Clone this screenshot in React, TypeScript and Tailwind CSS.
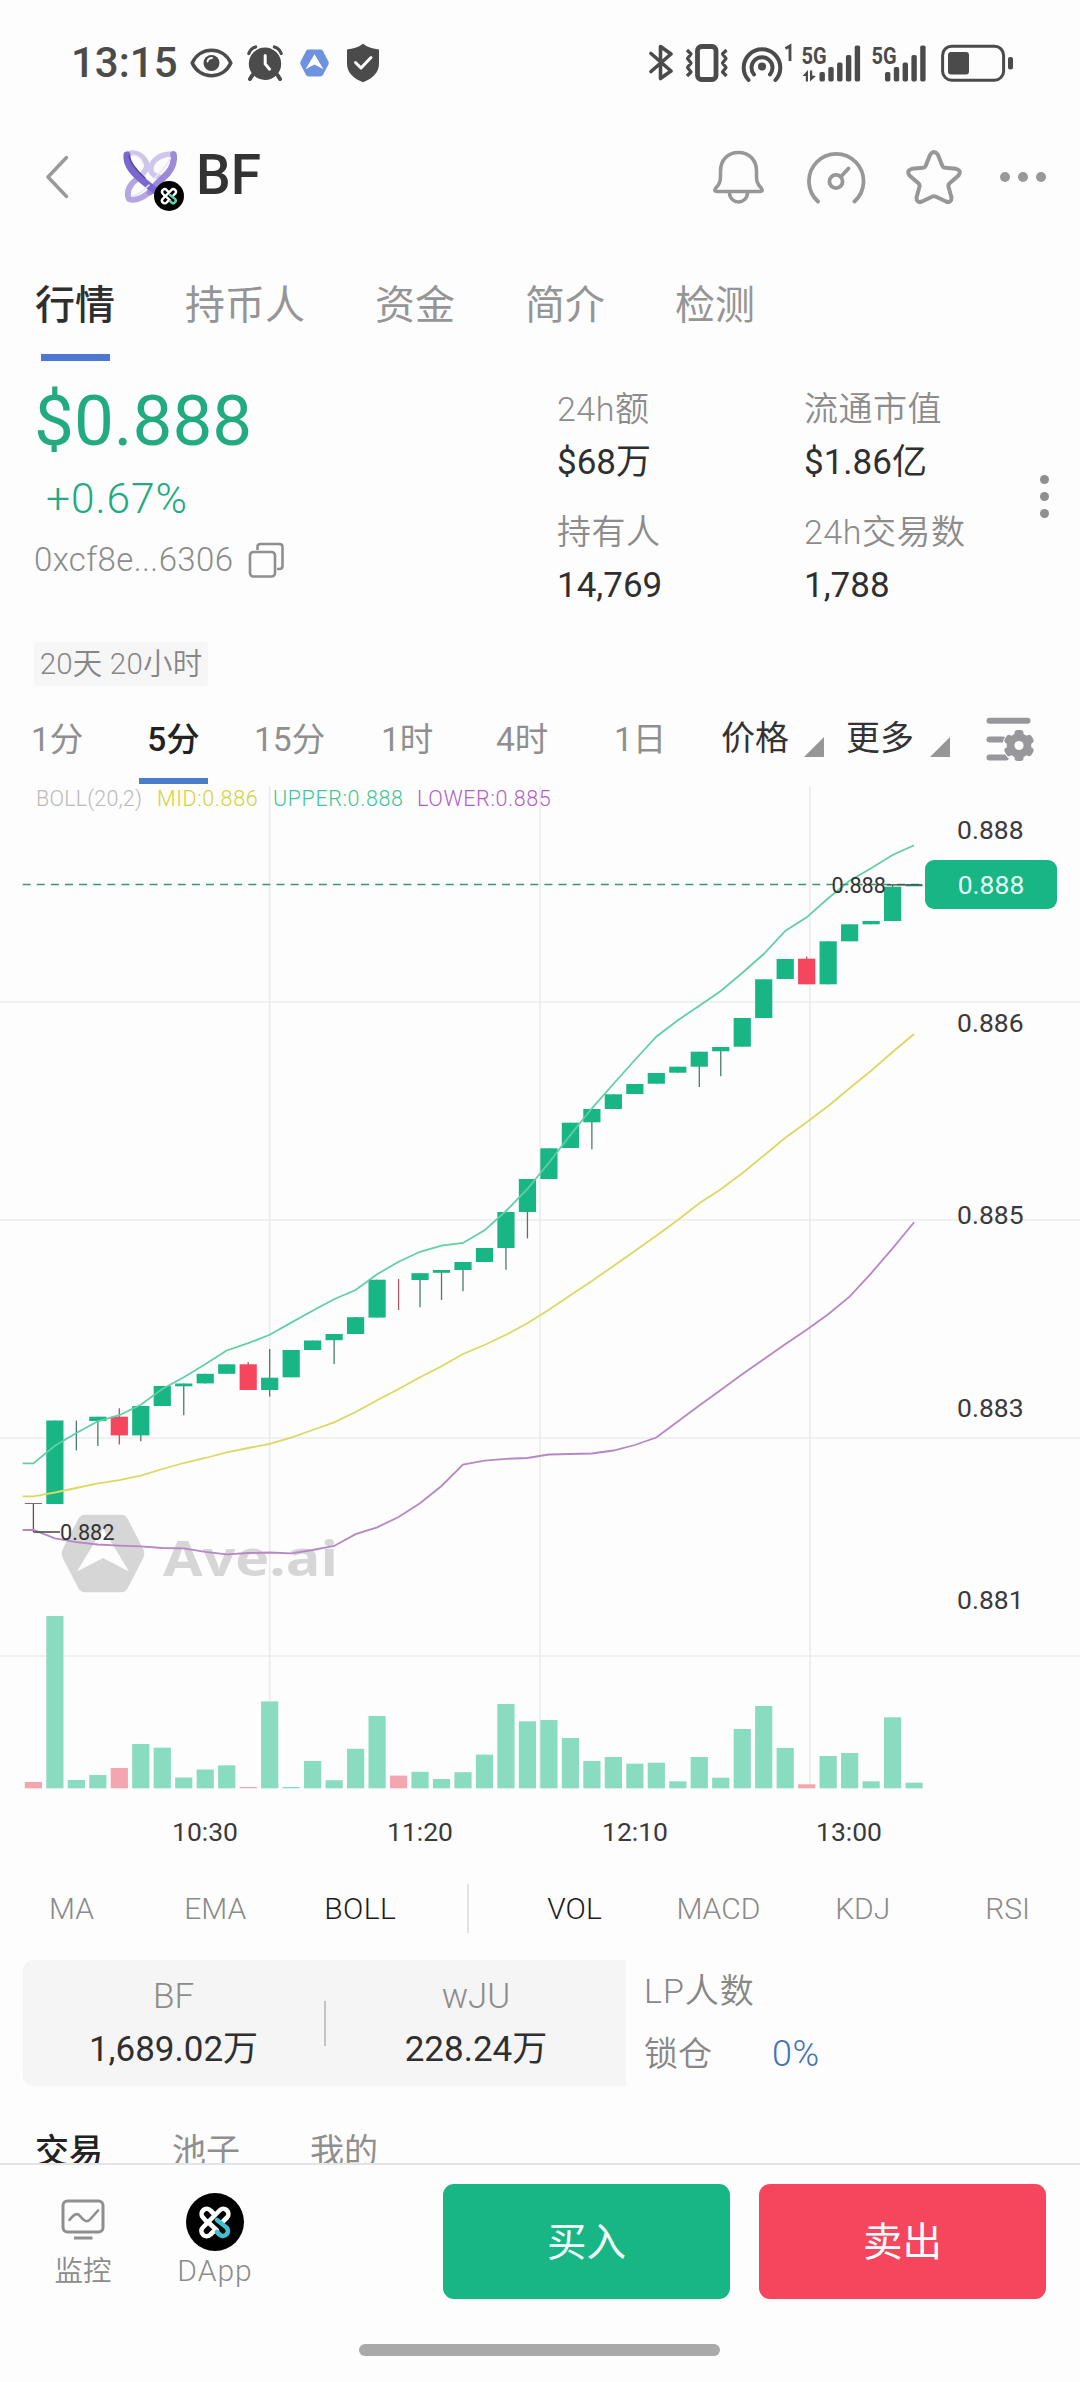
import React from "react";

const GREEN = "#18b585";
const RED = "#f6465d";

/* Candle: body top, body bottom, wick top, wick bottom, volume top, falling flag (chart coordinates) */
type Candle = [number, number, number, number, number, 0 | 1];
const CANDLES: Candle[] = [
  [1503, 1504, 1503, 1532, 1782, 1],
  [1420.5, 1504, 1420.5, 1504, 1616, 0],
  [1420.5, 1420.5, 1420.5, 1450.4, 1780, 0],
  [1416.7, 1421, 1416.7, 1446, 1775, 0],
  [1416.7, 1435.4, 1408.3, 1444.6, 1768, 1],
  [1406, 1435.4, 1406, 1441.2, 1744, 0],
  [1386, 1406, 1386, 1406, 1747.7, 0],
  [1383.5, 1386.3, 1383.5, 1415.2, 1777.5, 0],
  [1373.8, 1383.4, 1373.8, 1383.4, 1769.5, 0],
  [1364.3, 1373.8, 1364.3, 1373.8, 1765.3, 0],
  [1364.3, 1390, 1362, 1390, 1787, 1],
  [1377.7, 1390, 1349, 1396.4, 1701.4, 0],
  [1350, 1377.3, 1350, 1377.3, 1787, 0],
  [1340.5, 1350, 1340.5, 1350, 1761, 0],
  [1334, 1340.2, 1334, 1364, 1780.2, 0],
  [1317.2, 1334, 1317.2, 1334, 1748.8, 0],
  [1279.7, 1317.6, 1279.7, 1317.6, 1716, 0],
  [1279, 1279, 1279, 1310, 1775.6, 1],
  [1273.2, 1280, 1273.2, 1307.2, 1771.8, 0],
  [1270, 1272.8, 1270, 1300, 1779, 0],
  [1262, 1270, 1262, 1291.2, 1772.2, 0],
  [1248, 1262, 1248, 1262, 1754.6, 0],
  [1212, 1248, 1212, 1269.7, 1704, 0],
  [1179, 1212, 1179, 1238.4, 1721.3, 0],
  [1148.3, 1179, 1148.3, 1179, 1720, 0],
  [1122.7, 1148, 1122.7, 1148, 1738, 0],
  [1109, 1122.3, 1109, 1149.3, 1761, 0],
  [1094.3, 1109, 1094.3, 1109, 1757, 0],
  [1084, 1094, 1084, 1094, 1763.7, 0],
  [1073, 1083.7, 1073, 1083.7, 1762.7, 0],
  [1066.7, 1072.7, 1066.7, 1072.7, 1781.3, 0],
  [1051.7, 1066.7, 1051.7, 1087, 1757, 0],
  [1047, 1051.3, 1047, 1076.3, 1777.7, 0],
  [1018, 1046.7, 1018, 1046.7, 1729, 0],
  [979.3, 1018, 979.3, 1018, 1706, 0],
  [959, 979, 959, 979, 1748, 0],
  [958.7, 984.3, 956.5, 984.3, 1784.3, 1],
  [941.3, 984.3, 941.3, 984.3, 1756, 0],
  [924.3, 941.3, 924.3, 941.3, 1753, 0],
  [921, 924.3, 921, 924.3, 1781.3, 0],
  [886.7, 921, 885, 921, 1717.3, 0],
  [884.5, 886.3, 885, 885, 1782.7, 0],
];

const UPPER = [
  1463.4, 1445.8, 1433, 1421.3, 1415.2, 1404.8, 1389, 1377.3, 1364.3, 1350.5, 1343.2, 1334.8, 1322.6, 1310.7, 1299.2,
  1290, 1274.3, 1261.7, 1251.8, 1245.6, 1243, 1230.3, 1211, 1189, 1162.7, 1135, 1108.3, 1084, 1060, 1036.7, 1020.3,
  1005.7, 991, 973, 954, 931, 917.3, 898.3, 880.7, 868.3, 855, 845.3,
];
const MID = [
  1496.3, 1492.5, 1488, 1483.3, 1480.2, 1475.6, 1469, 1463, 1458, 1452.3, 1448, 1443.9, 1437.7, 1430, 1422.4, 1412,
  1400.2, 1389, 1377.3, 1366.2, 1354, 1345, 1334.8, 1323.3, 1309.7, 1295.3, 1281, 1266, 1251, 1235.7, 1220, 1203.3,
  1189.3, 1173.3, 1155.7, 1137.7, 1122.3, 1106, 1088.3, 1070.7, 1052, 1034,
];
const LOWER = [
  1530, 1538.4, 1542.2, 1544.5, 1545.6, 1546.4, 1548, 1548.3, 1551.8, 1554.4, 1553, 1552.5, 1553.3, 1550, 1546, 1534.2,
  1527.3, 1517, 1503.2, 1486, 1464.5, 1460.7, 1458.8, 1458, 1454.5, 1454, 1453.5, 1450.5, 1445, 1437.5, 1421.5, 1405.5,
  1390, 1374.3, 1359.3, 1344.3, 1329.7, 1314.3, 1296.7, 1273.3, 1248.3, 1222.3,
];

const candleX = (i: number) => 33.4 + i * 21.48;
const linePoints = (ys: number[]) =>
  `22.7,${ys[0]} ` + ys.map((y, i) => `${candleX(i).toFixed(1)},${y}`).join(" ");

/* ---------- icons ---------- */

function Eye() {
  return (
    <svg width="43" height="30" viewBox="0 0 43 30" fill="none" stroke="#4b4b4b">
      <path d="M2.2 15C10 -2 33 -2 40.8 15C33 32 10 32 2.2 15Z" strokeWidth="3.6" strokeLinejoin="round" />
      <circle cx="21.5" cy="15" r="8" fill="#4b4b4b" stroke="none" />
      <path d="M17.5 13.5A4.5 4.5 0 0 1 22 10" stroke="#fff" strokeWidth="1.8" strokeLinecap="round" />
    </svg>
  );
}

function Alarm() {
  return (
    <svg width="36" height="36" viewBox="0 0 36 36" fill="none" stroke="#4b4b4b" strokeLinecap="round">
      <circle cx="18" cy="18.7" r="16.2" fill="#4b4b4b" stroke="none" />
      <path d="M-.5 11Q2.500 3.500 10.500 .5M36.500 11Q33.500 3.500 25.500 .5" stroke="#fdfdfd" strokeWidth="7" strokeLinecap="butt" />
      <path d="M1.800 8.500Q3.500 3.500 8.600 2M34.200 8.500Q32.500 3.500 27.400 2" strokeWidth="3.2" />
      <path d="M5.5 30L3 34M30.5 30L33 34" strokeWidth="4" />
      <path d="M18.2 10.5V19L22.6 24.2" stroke="#fff" strokeWidth="3" />
    </svg>
  );
}

function AveHex({ className, color, arrow }: { className: string; color: string; arrow: string }) {
  return (
    <svg className={className} viewBox="0 0 84 78">
      <path
        d="M25 0H59Q64 0 66.500 4L82 34Q84.500 39 82 44L66.500 74Q64 78 59 78H25Q20 78 17.500 74L2 44Q-.500 39 2 34L17.500 4Q20 0 25 0Z"
        fill={color}
      />
      <path d="M42 14L68 57L42 43.500L16 57Z" fill={arrow} />
    </svg>
  );
}

function Shield() {
  return (
    <svg width="34" height="40" viewBox="0 0 34 40" fill="none">
      <path d="M17 .8C22 4.500 27 6 33 6.400V21C33 29.500 26 36 17 39.200C8 36 1 29.500 1 21V6.400C7 6 12 4.500 17 .8Z" fill="#4b4b4b" />
      <path d="M9.500 19.500L15 25L25 14.500" stroke="#fff" strokeWidth="3" strokeLinecap="round" strokeLinejoin="round" />
    </svg>
  );
}

function BluetoothIcon() {
  return (
    <svg width="24" height="37" viewBox="0 0 24 37" fill="none" stroke="#4b4b4b" strokeWidth="3.600" strokeLinejoin="round" strokeLinecap="round">
      <path d="M2 9.500L22 27L11.500 34.500V2.500L22 10L2 27.500" />
    </svg>
  );
}

function Vibrate() {
  return (
    <svg width="44" height="38" viewBox="0 0 44 38" fill="none" stroke="#4b4b4b">
      <rect x="12.500" y="2.500" width="18.500" height="33" rx="4" strokeWidth="4.800" />
      <path d="M2 6L6 10L2.500 14.500L6 19L2.500 23.500L6 28L2 32M41.500 6L37.500 10L41 14.500L37.500 19L41 23.500L37.500 28L41.500 32" strokeWidth="3.200" strokeLinejoin="round" />
    </svg>
  );
}

function Hotspot() {
  return (
    <svg width="52" height="40" viewBox="0 0 52 40" fill="none" stroke="#4b4b4b" strokeWidth="4">
      <path d="M7.500 37A18.300 18.300 0 1 1 34.500 37" strokeLinecap="round" />
      <path d="M13 31.500A10.500 10.500 0 1 1 29 31.500" strokeLinecap="round" />
      <circle cx="21" cy="23.500" r="4" fill="#4b4b4b" stroke="none" />
      <path d="M44.500 5.500L49 3V18" strokeWidth="2.800" />
    </svg>
  );
}

function Signal({ arrows }: { arrows?: boolean }) {
  const tops = [29, 24, 19.5, 12, 2.5];
  const start = arrows ? 17.5 : 13;
  return (
    <svg className={arrows ? "w-[60px]" : "w-[56px]"} height="40" viewBox={arrows ? "0 0 60 40" : "0 0 56 40"}>
      <text x="-.5" y="20.5" fontSize="23" fontWeight="700" fill="#4b4b4b" fontFamily="Roboto" textLength="25" lengthAdjust="spacingAndGlyphs">
        5G
      </text>
      {arrows && <path d="M.5 33L6 27V38.500H3.800V33ZM8 27.500H10.200V32.500L14 33L8 38.500Z" fill="#4b4b4b" />}
      {tops.map((t, i) => (
        <rect key={i} x={start + i * 8.8} y={t} width="5.400" height={38.5 - t} rx="1.800" fill="#4b4b4b" />
      ))}
    </svg>
  );
}

function Battery() {
  return (
    <svg width="73" height="38" viewBox="0 0 73 38" fill="none">
      <rect x="1.600" y="2.200" width="61" height="34" rx="9" stroke="#4b4b4b" strokeWidth="3" />
      <rect x="7" y="8" width="21" height="22.500" rx="3" fill="#4b4b4b" />
      <rect x="67" y="13" width="5" height="12.500" rx="2" fill="#4b4b4b" />
    </svg>
  );
}

/* Woven four-loop mark on a black disc */
function KnotMark({ className, accent }: { className: string; accent: string }) {
  return (
    <svg className={className} viewBox="0 0 58 58" fill="none">
      <circle cx="29" cy="29" r="29" fill="#000" />
      <g strokeWidth="4.600" strokeLinecap="round" strokeLinejoin="round">
        <path d="M29 37L24.500 41.500A4.900 4.900 0 0 1 16.800 34.500L33.500 17.500A4.900 4.900 0 0 1 41 24.500L37 28.500" stroke="#fff" />
        <path d="M21 29L17 24.500A4.900 4.900 0 0 1 24.500 17.500L28 21" stroke="#fff" />
        <path d="M21.500 28.500L31 37.500" stroke="#fff" />
        <path d="M31 27L40.500 34.500A4.900 4.900 0 0 1 33.500 41.500L31 39" stroke={accent} />
      </g>
    </svg>
  );
}

function TokenLogo() {
  return (
    <div className="relative h-[62px] w-[62px]">
      <svg className="h-[54px] w-[54px]" viewBox="0 0 54 54" fill="none" strokeLinecap="round" strokeLinejoin="round">
        <path d="M5 4C12 1 20 5 23.500 13C25 19 21 23 17 26" stroke="#cdc6ea" strokeWidth="5.500" />
        <path d="M36 27C28 25 26 20 29 14C33 7 41 4 50 4" stroke="#cfc8ec" strokeWidth="5.500" />
        <path d="M16 28C7 33 2.500 42 6 49C14 52 23 46 31 38" stroke="#b3a6e2" strokeWidth="6" />
        <path d="M50.500 4.500C52 14 47 22 40 28C34 33 30 38 27 42" stroke="#9a8ad8" strokeWidth="6.500" />
        <path d="M4 5C3 16 12 24 19 30C25 35 32 41 40 46" stroke="#7b68cf" strokeWidth="7" />
        <path d="M6 6C8 14 15 22 22 28" stroke="#5445a0" strokeWidth="1.500" />
        <path d="M47.500 8C44 16 37 22 31 29M9 46C16 45 21 40 26 35M9 5C15 5 19 9 20 14" stroke="#ebe7f9" strokeWidth="1.600" />
      </svg>
      <KnotMark className="absolute left-[31px] top-[31px] h-[30px] w-[30px]" accent="#5fd0b0" />
    </div>
  );
}

function SettingsIcon() {
  return (
    <svg width="48" height="44" viewBox="0 0 48 44" fill="none">
      <path d="M3.500 3.800H41.500M3.500 22.500H17M3.500 40.500H20" stroke="#98989c" strokeWidth="6" strokeLinecap="round" />
      <circle cx="33" cy="28.500" r="16.500" fill="#fdfdfd" />
      <g fill="#98989c">
        <circle cx="33" cy="28.500" r="12.300" />
        {[0, 60, 120, 180, 240, 300].map((a) => (
          <rect key={a} x="28.500" y="13" width="9" height="9" rx="3" transform={`rotate(${a} 33 28.500)`} />
        ))}
      </g>
      <circle cx="33" cy="28.500" r="4.600" fill="#fdfdfd" />
    </svg>
  );
}

/* ---------- sections ---------- */

function StatusBar() {
  return (
    <div className="flex h-[124px] items-center pl-[71px] pt-px text-[#4b4b4b]">
      <span className="w-[119px] text-[42px] font-medium leading-none">13:15</span>
      <Eye />
      <div className="ml-[14px] flex"><Alarm /></div>
      <AveHex className="ml-[17px] h-[28px] w-[29px]" color="#6f92e0" arrow="#fff" />
      <div className="ml-[17px]"><Shield /></div>
      <div className="ml-[269px] flex items-center">
        <BluetoothIcon />
        <div className="ml-[12px]"><Vibrate /></div>
        <div className="ml-[12px]"><Hotspot /></div>
        <div className="ml-[9px]"><Signal arrows /></div>
        <div className="ml-[10px]"><Signal /></div>
        <div className="ml-[13px]"><Battery /></div>
      </div>
    </div>
  );
}

function Header() {
  return (
    <div className="flex h-[106px] items-center pl-[44px]">
      <svg width="26" height="46" viewBox="0 0 26 46" fill="none" stroke="#999" strokeWidth="3.500" strokeLinecap="round" strokeLinejoin="round">
        <path d="M22.500 3.500L4 23L22.500 42.500" />
      </svg>
      <div className="ml-[53px] mt-[8px]"><TokenLogo /></div>
      <span className="-mt-[3px] ml-[11px] w-[517px] text-[55px] font-medium leading-none text-[#333]">BF</span>
      <svg className="shrink-0" width="51" height="54" viewBox="0 0 51 54" fill="none" stroke="#979797" strokeWidth="3.500" strokeLinejoin="round">
        <path d="M25.500 2.500C14.500 2.500 7.500 10.500 7.500 21C7.500 30 8 32.500 2.800 38C1 40.500 2 41.500 4 41.500H47C49 41.500 50 40.500 48.200 38C43 32.500 43.500 30 43.500 21C43.500 10.500 36.500 2.500 25.500 2.500Z" />
        <path d="M16.500 42.500C16.500 55 34.500 55 34.500 42.500" />
      </svg>
      <svg className="ml-[42px] shrink-0" width="60" height="54" viewBox="0 0 60 54" fill="none" stroke="#979797" strokeWidth="3.800" strokeLinecap="round">
        <path d="M12 51.500A27.300 27.300 0 1 1 48.500 51.500" />
        <circle cx="30" cy="31.500" r="6.600" />
        <path d="M35 26.500L42.500 18.500" />
      </svg>
      <svg className="ml-[40px] shrink-0" width="56" height="54" viewBox="0 0 56 54" fill="none" stroke="#979797" strokeWidth="4" strokeLinejoin="round">
        <path d="M24.200 4.600Q28 -.5 31.800 4.600L36.300 15.800Q37.200 17.600 39.200 17.800L50 18.800Q56 20.500 52.500 25.500L43.600 33.200Q42 34.500 42.500 36.800L45.500 47.500Q45.500 53.500 40 51.500L29.500 46.500Q28 45.800 26.500 46.500L16 51.500Q10.500 53.500 10.500 47.500L13.500 36.800Q14 34.500 12.400 33.200L3.500 25.500Q0 20.500 6 18.800L16.800 17.800Q18.800 17.600 19.700 15.800Z" />
      </svg>
      <div className="ml-[38px] flex gap-[8px]">
        <i className="h-[10px] w-[10px] rounded-full bg-[#999]" />
        <i className="h-[10px] w-[10px] rounded-full bg-[#999]" />
        <i className="h-[10px] w-[10px] rounded-full bg-[#999]" />
      </div>
    </div>
  );
}

function MainTabs() {
  return (
    <div className="flex h-[131px] gap-[70px] pl-[35px] pt-[46px] text-[40px] leading-[60px] text-[#959595]">
      <div className="flex flex-col items-center text-[#2e2e2e]">
        <span className="font-medium">行情</span>
        <span className="mt-[18px] h-[7px] w-[69px] bg-[#4c78cf]" />
      </div>
      {["持币人", "资金", "简介", "检测"].map((t) => (
        <span key={t}>{t}</span>
      ))}
    </div>
  );
}

function Stat({ label, value }: { label: string; value: string }) {
  return (
    <div className="h-[123px]">
      <div className="h-[53px] text-[34px] font-[350] leading-[53px] tracking-[0.5px] text-[#8c8c8c]">{label}</div>
      <div className="h-[53px] text-[35px] leading-[53px] text-[#2f2f2f]">{value}</div>
    </div>
  );
}

function Summary() {
  return (
    <div className="flex h-[331px] pl-[34px]">
      <div className="w-[523px]">
        <div className="mt-[18px] h-[84px] text-[71px] leading-[84px] text-[#22ab80]">$0.888</div>
        <div className="mt-[11px] h-[50px] pl-[12px] text-[42.5px] font-[350] leading-[50px] tracking-[0.9px] text-[#22ab80]">+0.67%</div>
        <div className="mt-[14px] flex h-[44px] items-center">
          <span className="w-[214px] text-[33px] font-[350] tracking-[0.4px] text-[#8c8c8c]">0xcf8e...6306</span>
          <svg width="36" height="36" viewBox="0 0 36 36" fill="none" stroke="#8f8f8f" strokeWidth="2.600">
            <rect x="2" y="10" width="25" height="24.500" rx="3.500" />
            <path d="M9.500 8V5Q9.500 2 12.500 2H31.500Q34.500 2 34.500 5V24Q34.500 27 31.500 27H29" />
          </svg>
        </div>
        <div className="mt-[60px] flex h-[44px] w-[174px] items-center justify-center whitespace-nowrap rounded-[4px] bg-[#f6f6f6] text-[29.5px] font-[350] tracking-[0.2px] text-[#868686]">
          20天 20小时
        </div>
      </div>
      <div className="grid w-[470px] grid-cols-[247px_1fr] content-start pt-[22px]">
        <Stat label="24h额" value="$68万" />
        <Stat label="流通市值" value="$1.86亿" />
        <Stat label="持有人" value="14,769" />
        <Stat label="24h交易数" value="1,788" />
      </div>
      <div className="ml-[13px] flex flex-col gap-[8px] pt-[114px]">
        <i className="h-[9px] w-[9px] rounded-full bg-[#8f8f8f]" />
        <i className="h-[9px] w-[9px] rounded-full bg-[#8f8f8f]" />
        <i className="h-[9px] w-[9px] rounded-full bg-[#8f8f8f]" />
      </div>
    </div>
  );
}

function Corner() {
  return (
    <svg width="20" height="20" viewBox="0 0 20 20">
      <path d="M20 0V20H0Z" fill="#969696" />
    </svg>
  );
}

function Intervals() {
  return (
    <div className="flex h-[92px] pl-[31px] pt-[23px] text-[33.5px] leading-[50px] text-[#8f8f8f]">
      <span className="w-[108px]">1分</span>
      <div className="flex w-[69px] flex-col items-center font-medium text-[#222]">
        <span className="leading-[50px]">5分</span>
        <span className="mt-[13px] h-[6px] w-full bg-[#4a7cc8]" />
      </div>
      <span className="ml-[46px] w-[127px]">15分</span>
      <span className="w-[115px]">1时</span>
      <span className="w-[118px]">4时</span>
      <span className="w-[107px]">1日</span>
      <span className="-mt-[2px] w-[83px] text-[34px] text-[#333]">价格</span>
      <div className="pt-[22px]"><Corner /></div>
      <span className="-mt-[2px] ml-[22px] w-[84px] text-[34px] text-[#333]">更多</span>
      <div className="pt-[22px]"><Corner /></div>
      <div className="ml-[36px] pt-[2px]"><SettingsIcon /></div>
    </div>
  );
}

const GRID_Y = [1002, 1220, 1438, 1656];
const GRID_X = [269.7, 540, 810];
const AXIS: [string, number][] = [
  ["0.888", 838.7],
  ["0.886", 1031.5],
  ["0.885", 1224],
  ["0.883", 1416.5],
  ["0.881", 1608.5],
];
const TIMES: [string, number][] = [
  ["10:30", 205],
  ["11:20", 420],
  ["12:10", 635],
  ["13:00", 849],
];

function Chart() {
  return (
    <div className="relative h-[1080px]">
      <svg width="1080" height="1080" viewBox="0 784 1080 1080" fontFamily="Roboto" className="block">
        <g stroke="#ebebeb" strokeWidth="1.600">
          {GRID_Y.map((y) => <line key={y} x1="0" x2="1080" y1={y} y2={y} />)}
          {GRID_X.map((x) => <line key={x} x1={x} x2={x} y1="786" y2="1788" />)}
        </g>
        <svg x="61" y="1514.500" width="84" height="78" viewBox="0 0 84 78">
          <path d="M25 0H59Q64 0 66.500 4L82 34Q84.500 39 82 44L66.500 74Q64 78 59 78H25Q20 78 17.500 74L2 44Q-.500 39 2 34L17.500 4Q20 0 25 0Z" fill="#d6d6d6" />
          <path d="M42 14L68 57L42 43.500L16 57Z" fill="#fdfdfd" />
        </svg>
        <text x="163" y="1575.500" fontSize="49" fontWeight="700" fontFamily="Open Sans" fill="#d6d6d6" textLength="175" lengthAdjust="spacingAndGlyphs">
          Ave.ai
        </text>
        {CANDLES.map(([, , , , v, red], i) => (
          <rect key={i} x={candleX(i) - 8.6} y={v} width="17.200" height={1788.3 - v} fill={red ? "#f3a5b0" : "#8adcc1"} />
        ))}
        {CANDLES.map(([t, b, wt, wb, , red], i) => (
          <g key={i}>
            <line x1={candleX(i)} x2={candleX(i)} y1={wt} y2={wb} stroke={i === 0 ? "#6d4a5a" : red ? "#a8586a" : "#4c7a6b"} strokeWidth="1.300" />
            <rect x={candleX(i) - 8.6} y={t} width="17.200" height={b - t} fill={i === 0 ? "#8d6470" : red ? RED : GREEN} />
          </g>
        ))}
        <g fill="none" strokeWidth="1.800">
          <polyline points={linePoints(MID)} stroke="#d9da62" />
          <polyline points={linePoints(UPPER)} stroke="#62cfa5" />
          <polyline points={linePoints(LOWER)} stroke="#b787c4" />
        </g>
        <line x1="22.700" x2="925" y1="884.500" y2="884.500" stroke="#3d9579" strokeWidth="1.600" strokeDasharray="8 6.100" />
        <path d="M887 884.800H922M33.400 1532H60" stroke="#444" strokeWidth="1.300" />
        <g fill="#333" fontSize="21.700">
          <text x="831.500" y="892.500">0.888</text>
          <text x="60" y="1540">0.882</text>
        </g>
        <g fill="#3a3a3a" fontSize="26.500" fontWeight="400">
          {AXIS.map(([t, y]) => <text key={t} x="957" y={y}>{t}</text>)}
          {TIMES.map(([t, x]) => <text key={t} x={x} y="1841" textAnchor="middle">{t}</text>)}
        </g>
      </svg>
      <div className="absolute left-[36px] top-[1px] flex whitespace-nowrap text-[21.500px] font-[350] leading-[28px] tracking-[0.6px]">
        <span className="w-[121px] tracking-[0.2px] text-[#b9b9b9]">BOLL(20,2)</span>
        <span className="w-[116px] text-[#d3d238]">MID:0.886</span>
        <span className="w-[144px] text-[#3fc596]">UPPER:0.888</span>
        <span className="text-[#b05fc4]">LOWER:0.885</span>
      </div>
      <div className="absolute left-[925px] top-[76px] flex h-[49px] w-[132px] items-center justify-center rounded-[9px] bg-[#18b585] text-[26.500px] text-[#e4fff5]">
        0.888
      </div>
    </div>
  );
}

function Indicators() {
  return (
    <div className="mb-[8px] flex h-[88px] items-center text-[30px] font-[350] text-[#8a8a8a]">
      <span className="w-[143px] text-center">MA</span>
      <span className="w-[145px] text-center">EMA</span>
      <span className="w-[145px] text-center tracking-[0.4px] text-[#1c1c1c]">BOLL</span>
      <span className="ml-[34px] h-[49px] w-[2px] bg-[#e3e3e3]" />
      <span className="ml-[34px] w-[144px] text-center text-[#1c1c1c]">VOL</span>
      <span className="w-[144px] text-center">MACD</span>
      <span className="w-[145px] text-center">KDJ</span>
      <span className="w-[145px] text-center">RSI</span>
    </div>
  );
}

function Pool() {
  return (
    <div className="flex h-[126px] pl-[23px]">
      <div className="flex w-[603px] items-center rounded-l-[10px] bg-[#f5f5f5] text-center text-[35px]">
        <div className="w-[302px]">
          <div className="font-[350] leading-[52px] text-[#8c8c8c]">BF</div>
          <div className="leading-[53px] text-[#2f2f2f]">1,689.02万</div>
        </div>
        <span className="h-[45px] w-[2px] bg-[#c4c4c4]" />
        <div className="w-[301px]">
          <div className="font-[350] leading-[52px] text-[#8c8c8c]">wJU</div>
          <div className="leading-[53px] text-[#2f2f2f]">228.24万</div>
        </div>
      </div>
      <div className="ml-[18px] pt-[2px] text-[34px] font-[350] text-[#878787]">
        <div className="h-[62px] leading-[58px] tracking-[1px]">LP人数</div>
        <div className="flex h-[62px] leading-[60px]">
          <span className="w-[128px]">锁仓</span>
          <span className="text-[36px] tracking-[0.5px] text-[#4373b5]">0%</span>
        </div>
      </div>
    </div>
  );
}

export default function App() {
  return (
    <div className="flex h-[2382px] w-[1080px] flex-col overflow-hidden bg-[#fdfdfd] font-['Roboto','Noto_Sans_CJK_SC',sans-serif]">
      <StatusBar />
      <Header />
      <MainTabs />
      <Summary />
      <Intervals />
      <Chart />
      <Indicators />
      <Pool />
      <div className="flex h-[77px] overflow-hidden pl-[35px] pt-[40px] text-[34px] leading-[50px] text-[#8f8f8f]">
        <span className="w-[137px] font-medium text-[#222]">交易</span>
        <span className="w-[138px]">池子</span>
        <span>我的</span>
      </div>
      <div className="flex h-[219px] flex-col border-t-2 border-[#e4e4e4]">
        <div className="flex pl-[54px] pt-[19px] text-[#8c8c8c]">
          <div className="flex w-[58px] flex-col items-center pt-[15px]">
            <svg width="46" height="42" viewBox="0 0 46 42" fill="none" stroke="#8f8f8f" strokeWidth="3" strokeLinecap="round" strokeLinejoin="round">
              <rect x="3" y="2" width="40" height="31" rx="4.500" />
              <path d="M9.500 21C14 15 17 13.500 20 17C24 22 27 24 30.500 20L38 11.500" strokeWidth="2.600" />
              <path d="M14 39H32.500" strokeLinecap="butt" />
            </svg>
            <span className="mt-[12px] text-[28.500px] font-[350] leading-[38px]">监控</span>
          </div>
          <div className="ml-[60px] flex w-[86px] flex-col items-center pt-[9px]">
            <KnotMark className="h-[58px] w-[58px]" accent="#3fbfd0" />
            <span className="text-[30px] font-[350] leading-[40px] tracking-[1px]">DApp</span>
          </div>
          <div className="ml-[185px] flex h-[115px] w-[287px] items-center justify-center rounded-[11px] bg-[#18b585] pt-[3px] text-[39.500px] text-[#f4fffb]">买入</div>
          <div className="ml-[29px] flex h-[115px] w-[287px] items-center justify-center rounded-[11px] bg-[#f6465d] pt-[3px] text-[39.500px] text-white">卖出</div>
        </div>
        <div className="ml-[359px] mt-[45px] h-[12px] w-[361px] rounded-full bg-[#a9a9a9]" />
      </div>
    </div>
  );
}
